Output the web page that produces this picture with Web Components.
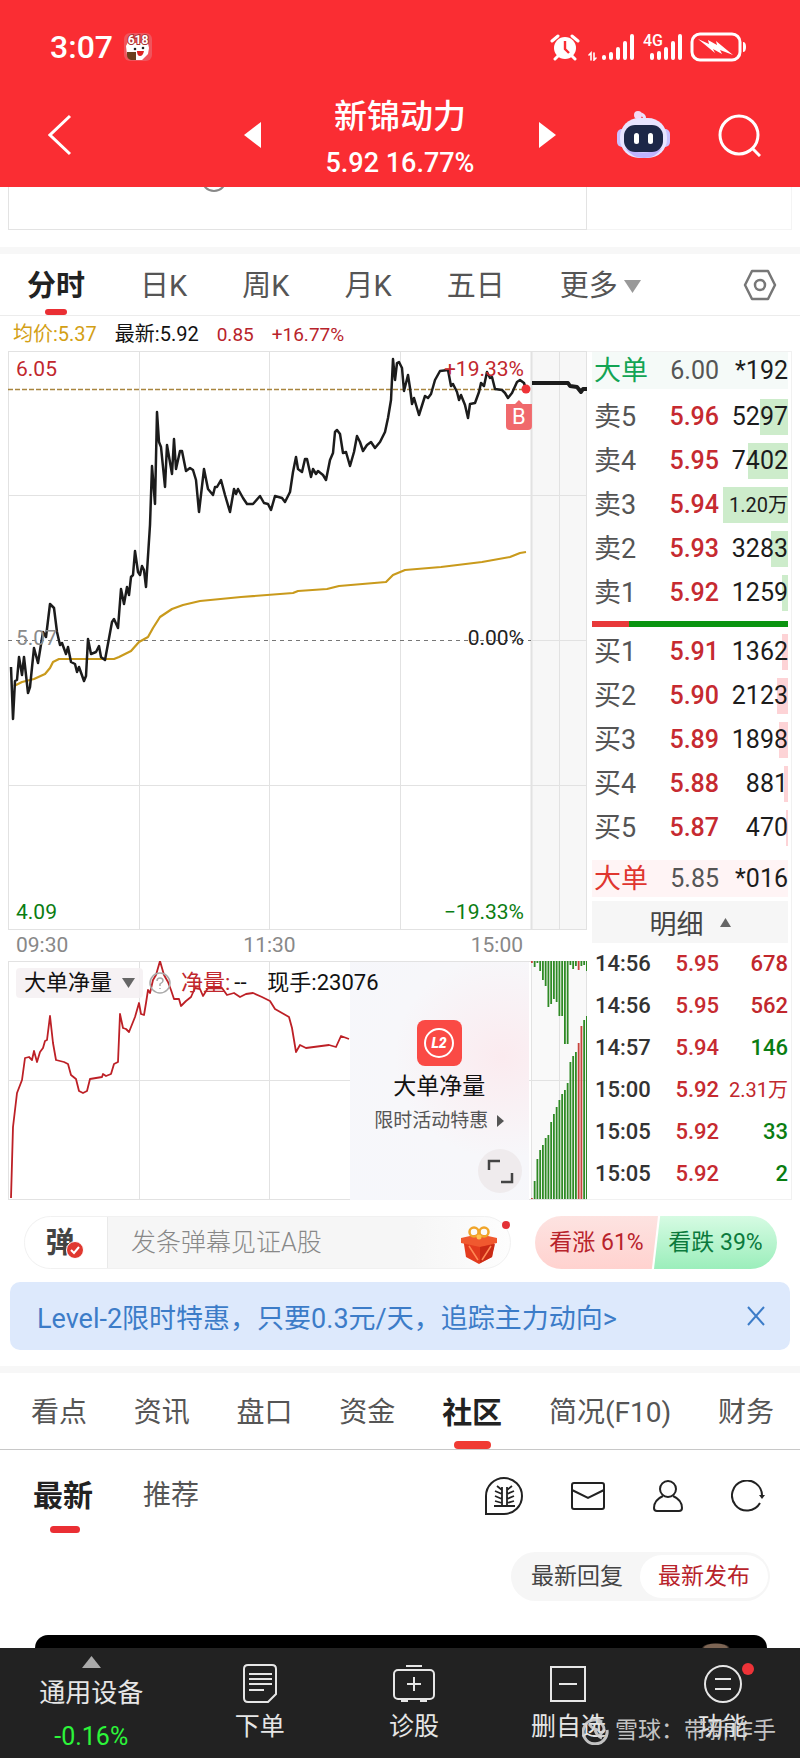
<!DOCTYPE html>
<html lang="zh-CN">
<head>
<meta charset="utf-8">
<meta name="viewport" content="width=device-width, initial-scale=1">
<title>新锦动力</title>
<style>
    body {
        margin: 0;
        min-height: 100vh;
        display: flex;
        flex-direction: column;
        background: #fff;
        color: #222;
        font-family: Roboto, "Noto Sans CJK SC", sans-serif;
    }

    .quote {
        display: flex;
        padding: 0 8px;
    }

    .charts {
        flex: 1;
        min-width: 0;
    }
</style>
</head>
<body>

<stock-header name="新锦动力" price="5.92" change="16.77%"></stock-header>
<prev-panel></prev-panel>
<period-tabs></period-tabs>
<quote-legend></quote-legend>
<div class="quote">
    <div class="charts">
        <price-chart></price-chart>
        <time-axis><span>09:30</span><span>11:30</span><span>15:00</span></time-axis>
        <flow-chart></flow-chart>
    </div>
    <order-book></order-book>
</div>
<barrage-bar></barrage-bar>
<promo-banner>Level-2限时特惠，只要0.3元/天，追踪主力动向&gt;</promo-banner>
<info-tabs></info-tabs>
<community-panel></community-panel>
<bottom-nav></bottom-nav>

<script>
//every element clones its template into an open shadow root
class BaseElement extends HTMLElement {
    constructor(){
        super();
        this.attachShadow({mode:"open"});
    }
    useTemplate(html){
        var template = document.createElement("template");
        template.innerHTML = `
        <style>
            :host, * { box-sizing: border-box; }
            button, input, select {
                font: inherit;
                color: inherit;
                background: none;
                border: 0;
                margin: 0;
                padding: 0;
            }
            a { color: inherit; text-decoration: none; }
            svg { display: block; }
        </style>` + html;
        this.shadowRoot.appendChild(template.content.cloneNode(true));
    }
}

//RED HEADER WITH STATUS BAR
class StockHeader extends BaseElement {
    connectedCallback(){
        this.useTemplate(`
<style>
    :host {
        display: block;
        background: #fa2d33;
        color: #fff;
    }
    .status {
        display: flex;
        justify-content: space-between;
        align-items: center;
        height: 66px;
        padding: 28px 53px 0 50px;
        font-size: 32px;
        line-height: 38px;
        font-weight: 500;
    }
    .left { display: flex; align-items: center; gap: 11px; }
    .right { display: flex; align-items: center; gap: 8px; }
    .bar {
        display: grid;
        grid-template-columns: 1fr auto 1fr;
        padding: 29px 39px 0;
    }
    .bar button { display: flex; align-items: center; height: 80px; }
    .bar .back { padding-left: 9px; }
    .middle { display: flex; width: 313px; justify-content: space-between; }
    .title { text-align: center; }
    h1 { margin: 0; font-size: 33px; line-height: 44px; font-weight: 500; }
    .price { font-size: 27px; line-height: 48px; font-weight: 500; }
    .tools { display: flex; justify-content: flex-end; gap: 48px; }
</style>
<div class="status">
    <div class="left">
        <span>3:07</span>
        <svg width="28" height="28" viewBox="0 0 28 28">
            <rect width="28" height="28" rx="6" fill="#f0545c"/>
            <path d="M2 13 5 7l4 3h9l5-4 2 9-1 6-6 6H8l-5-5Z" fill="#fff"/>
            <text x="14" y="11" font-size="12" font-weight="700" text-anchor="middle" fill="#fff" stroke="#a33" stroke-width="2" paint-order="stroke">618</text>
            <circle cx="11" cy="16" r="1.3" fill="#222"/><circle cx="19" cy="15" r="1.3" fill="#222"/>
            <path d="M13 18h7q-1 5-4 5t-3-5Z" fill="#d22"/>
            <path d="M3 19h9v8H7q-4-1-4-5Z" fill="#6b3f1d"/>
        </svg>
    </div>
    <div class="right">
        <svg width="30" height="28" viewBox="0 0 30 28" fill="none" stroke="#fff">
            <circle cx="15" cy="15" r="11" fill="#fff" stroke="none"/>
            <path d="M2 8 8 3M28 8 22 3M8 23l-3 3M22 23l3 3" stroke-width="3" stroke-linecap="round"/>
            <path d="M15 8v8l4 4" stroke="#fa2d33" stroke-width="2.4"/>
        </svg>
        <svg width="47" height="28" viewBox="0 0 47 28" stroke="#fff" stroke-width="4" stroke-linecap="round">
            <path d="M3 27V20l-2 2M6 20v7l2-2" stroke-width="1.6" fill="none"/>
            <path d="M16 24v1M23 21v4M30 16v9M37 10v15M44 3v22"/>
        </svg>
        <svg width="39" height="28" viewBox="0 0 39 28" stroke="#fff" stroke-width="4" stroke-linecap="round">
            <text x="0" y="13" font-size="16" font-weight="500" fill="#fff" stroke="none">4G</text>
            <path d="M9 22v3M16 20v5M23 16v9M30 10v15M37 3v22"/>
        </svg>
        <svg width="57" height="30" viewBox="0 0 57 30">
            <rect x="2" y="2" width="48" height="26" rx="8" fill="none" stroke="#fff" stroke-width="3"/>
            <path d="M53 10q3 0 3 5t-3 5Z" fill="#fff"/>
            <path d="m8 7 11 5-1-4 9 5-1-4 17 14-13-5 2 4-9-5 2 4Z" fill="#fff"/>
        </svg>
    </div>
</div>
<div class="bar">
    <button class="back" aria-label="返回">
        <svg width="24" height="42" viewBox="0 0 24 42" fill="none" stroke="#fff" stroke-width="3"><path d="M22 2 2 21l20 19"/></svg>
    </button>
    <div class="middle">
        <button aria-label="上一只"><svg width="17" height="26" viewBox="0 0 17 26"><path d="M17 0v26L0 13Z" fill="#fff"/></svg></button>
        <div class="title">
            <h1></h1>
            <div class="price"></div>
        </div>
        <button aria-label="下一只"><svg width="17" height="26" viewBox="0 0 17 26"><path d="M0 0v26l17-13Z" fill="#fff"/></svg></button>
    </div>
    <div class="tools">
        <button aria-label="助手">
            <svg width="53" height="48" viewBox="0 0 53 48">
                <path d="M27 10q2-5-3-7" fill="none" stroke="#e9e2ff" stroke-width="3"/>
                <circle cx="21" cy="4" r="4" fill="#f4d9f5"/>
                <rect x="0" y="18" width="10" height="18" rx="5" fill="#c9c0ff"/>
                <rect x="43" y="18" width="10" height="18" rx="5" fill="#c9c0ff"/>
                <rect x="3" y="7" width="47" height="40" rx="19" fill="#e8e4ff"/>
                <path d="M8 37q18 9 37 0-6 10-18 10T8 37Z" fill="#bfb4ff"/>
                <rect x="7" y="14" width="39" height="27" rx="11" fill="#1d2748"/>
                <rect x="17" y="22" width="5" height="11" rx="2.5" fill="#fff"/>
                <rect x="31" y="22" width="5" height="11" rx="2.5" fill="#fff"/>
            </svg>
        </button>
        <button aria-label="搜索">
            <svg width="43" height="43" viewBox="0 0 43 43" fill="none" stroke="#fff" stroke-width="3"><circle cx="21" cy="21" r="19"/><path d="m34 34 8 8"/></svg>
        </button>
    </div>
</div>`);
        this.shadowRoot.querySelector("h1").textContent = this.getAttribute("name");
        this.shadowRoot.querySelector(".price").textContent = this.getAttribute("price") + " " + this.getAttribute("change");
    }
}
customElements.define("stock-header", StockHeader);

//BOTTOM EDGE OF THE PANEL SCROLLED UNDER THE HEADER
class PrevPanel extends BaseElement {
    connectedCallback(){
        this.useTemplate(`
<style>
    :host { display: block; border-bottom: 7px solid #f7f7f7; padding: 0 8px 17px; }
    .row { display: flex; height: 43px; overflow: hidden; }
    .a { flex: 1; border: solid #e3e3e3; border-width: 0 1px 1px; }
    .b { width: 205px; border: solid #f4f4f4; border-width: 0 1px 1px 0; }
    svg { margin-left: 192px; }
</style>
<div class="row">
    <div class="a"><svg width="26" height="6" viewBox="0 0 26 6"><circle cx="13" cy="-8" r="12" fill="none" stroke="#888" stroke-width="2"/></svg></div>
    <div class="b"></div>
</div>`);
    }
}
customElements.define("prev-panel", PrevPanel);

//CHART PERIOD TABS
class PeriodTabs extends BaseElement {
    connectedCallback(){
        this.useTemplate(`
<style>
    :host { display: block; border-bottom: 1px solid #ececec; }
    nav {
        display: flex;
        align-items: center;
        gap: 55px;
        padding: 0 23px 0 27px;
        height: 61px;
        font-size: 29px;
        line-height: 57px;
        color: #555;
        white-space: nowrap;
    }
    button { display: flex; align-items: center; gap: 6px; position: relative; padding-top: 4px; }
    .on { font-weight: 700; color: #222; }
    .on::after {
        content: "";
        position: absolute;
        left: 50%;
        bottom: 0;
        width: 22px;
        height: 6px;
        margin-left: -11px;
        border-radius: 3px;
        background: #ea2f34;
    }
    .set { margin-left: auto; padding-top: 0; }
</style>
<nav>
    <button class="on">分时</button>
    <button>日K</button>
    <button>周K</button>
    <button>月K</button>
    <button>五日</button>
    <button>更多<svg width="17" height="13" viewBox="0 0 17 13"><path d="M0 0h17L8.5 13Z" fill="#999"/></svg></button>
    <button class="set" aria-label="设置">
        <svg width="34" height="34" viewBox="0 0 34 34" fill="none" stroke="#777" stroke-width="2.5" stroke-linejoin="round"><path d="M9 3h16l7 14-7 14H9L2 17Z"/><circle cx="17" cy="17" r="5"/></svg>
    </button>
</nav>`);
    }
}
customElements.define("period-tabs", PeriodTabs);

class QuoteLegend extends BaseElement {
    connectedCallback(){
        this.useTemplate(`
<style>
    :host {
        display: flex;
        gap: 18px;
        padding: 2px 13px 0;
        font-size: 20px;
        line-height: 33px;
    }
    .avg { color: #d3a015; }
    .last { color: #111; }
    .up { color: #b8232b; font-size: 19px; }
</style>
<span class="avg">均价:5.37</span>
<span class="last">最新:5.92</span>
<span class="up">0.85</span>
<span class="up">+16.77%</span>`);
    }
}
customElements.define("quote-legend", QuoteLegend);

//INTRADAY PRICE LINE
class PriceChart extends BaseElement {
    connectedCallback(){
        this.useTemplate(`
<style>
    :host { display: grid; position: relative; height: 579px; }
    svg, .labels { grid-area: 1 / 1; }
    .plot { width: 100%; height: 100%; }
    .plot * { vector-effect: non-scaling-stroke; }
    .labels {
        display: flex;
        flex-direction: column;
        justify-content: space-between;
        padding: 0 63px 0 8px;
        font-size: 21px;
        line-height: 36px;
        z-index: 1;
    }
    .labels div { display: flex; justify-content: space-between; }
    .up { color: #c1272d; }
    .down { color: #0a7d12; }
    .zero { padding-bottom: 6px; }
    .zero span:first-child { color: #8b8b8b; }
    .buy {
        position: absolute;
        left: 86%;
        top: 49px;
        width: 26px;
        height: 30px;
        padding-top: 3px;
        background: #f0696c;
        clip-path: polygon(0 4px, 35% 4px, 50% 0, 65% 4px, 100% 4px, 100% 100%, 0 100%);
        border-radius: 4px;
        color: #fff;
        font-size: 22px;
        line-height: 27px;
        text-align: center;
    }
</style>
<svg class="plot" viewBox="8 351 579 579" preserveAspectRatio="none" fill="none">
    <rect x="531" y="351" width="56" height="579" fill="#f7f7f7"/>
    <path d="M8.5 351V930M139.5 351V930M269.5 351V930M400.5 351V930M559.5 351V930M586.5 351V930M8 351.5H587M8 495.5H587M531 640.5H587M8 785.5H587M8 929.5H587" stroke="#e2e2e2"/>
    <path d="M531.5 351V930" stroke="#e2e2e2" stroke-width="2"/>
    <path d="M8 640.5H531" stroke="#777" stroke-dasharray="4 4"/>
    <path d="M8 389.5H526" stroke="#a8853f" stroke-width="1.5" stroke-dasharray="5 2"/>
    <polyline stroke="#c99a1c" stroke-width="2.2" stroke-linejoin="round" points="14,686 22,682 34,679 45,674 50,668 53,662 59,659 114,659 119,657 131,651 139,642 148,637 153,628 160,617 172,609 183,605 200,601 241,597 293,593 298,591 327,589 339,586 386,582 393,575 405,570 441,567 482,562 510,557 520,553 526,552"/>
    <polyline stroke="#1c1c1c" stroke-width="2.5" stroke-linejoin="round" points="11,667 13,719 15,681 17,680 19,657 22,675 24,657 28,693 30,687 34,648 38,663 43,632 46,637 50,604 54,608 57,632 60,645 62,643 66,654 68,647 71,662 75,664 77,672 79,667 84,681 86,676 88,639 91,654 96,652 99,646 101,657 105,660 112,622 114,619 118,628 121,589 124,604 127,587 129,595 131,577 133,575 135,551 138,572 140,575 142,566 144,570 146,587 150,525 152,466 155,504 157,412 159,442 161,447 165,487 167,445 172,474 174,439 176,469 180,451 182,451 186,471 190,468 193,470 196,480 199,512 204,469 208,489 213,495 215,487 217,487 221,480 225,495 230,512 234,489 236,494 238,489 243,498 247,504 253,504 260,496 264,503 268,504 271,510 275,496 282,498 285,502 290,492 293,472 296,457 298,469 302,472 305,459 307,459 311,477 313,469 316,474 318,471 323,475 326,480 330,460 333,453 335,432 337,430 340,434 343,453 346,452 350,466 354,452 357,436 360,442 363,451 367,445 371,442 375,448 380,442 385,432 388,418 391,400 393,359 395,380 397,363 399,362 402,368 404,391 408,375 410,388 412,404 414,398 419,415 425,396 428,398 431,394 435,380 440,371 448,370 451,386 453,384 457,392 459,400 461,395 465,405 468,418 470,404 475,403 479,392 481,383 484,386 487,372 490,378 492,377 495,389 502,390 505,393 508,398 512,393 517,382 520,380 524,383 526,389"/>
    <polyline stroke="#1c1c1c" stroke-width="4" stroke-linejoin="round" points="532,383 568,383 570,386 577,387 581,392 583,389 587,389"/>
    <circle cx="526" cy="389" r="4.5" fill="#ee3338"/>
</svg>
<div class="labels">
    <div class="up"><span>6.05</span><span>+19.33%</span></div>
    <div class="zero"><span>5.07</span><span>0.00%</span></div>
    <div class="down"><span>4.09</span><span>−19.33%</span></div>
</div>
<div class="buy">B</div>`);
    }
}
customElements.define("price-chart", PriceChart);

class TimeAxis extends BaseElement {
    connectedCallback(){
        this.useTemplate(`
<style>
    :host {
        display: flex;
        justify-content: space-between;
        padding: 0 64px 0 8px;
        font-size: 21px;
        line-height: 31px;
        color: #888;
    }
</style>
<slot></slot>`);
    }
}
customElements.define("time-axis", TimeAxis);

//BIG ORDER FLOW, WITH THE CALL AUCTION BARS ON THE RIGHT
//"r" after a number makes a red bar
const AUCTION_TOP = "2r 6 2 10 19 25 46 43 38 41 55 55 83 83 4 8 5 9r 5 4 10".split(" ");
const AUCTION_BOTTOM = "1r 18 40 49 54 61 64 77 85 92 99 105 109 116 137 143 147 156r 173r 179 183".split(" ");

class FlowChart extends BaseElement {
    connectedCallback(){
        this.useTemplate(`
<style>
    :host { display: grid; position: relative; height: 239px; }
    .plot { grid-area: 1 / 1; width: 100%; height: 100%; }
    .plot * { vector-effect: non-scaling-stroke; }
    .head {
        grid-area: 1 / 1;
        align-self: start;
        display: flex;
        align-items: center;
        margin: 7px 0 0 8px;
        font-size: 22px;
        line-height: 30px;
        color: #111;
        z-index: 2;
        white-space: nowrap;
    }
    label { display: flex; align-items: center; width: 127px; padding-left: 8px; background: rgba(244,240,242,.85); border-radius: 4px; }
    select { appearance: none; width: 98px; height: 30px; line-height: 30px; color: #111; }
    .help { margin: 0 10px 0 6px; }
    .up { color: #c1272d; }
    .net { width: 37px; padding-left: 4px; }
    .promo {
        position: absolute;
        left: 59%;
        top: 1px;
        bottom: 0;
        width: 31%;
        display: flex;
        flex-direction: column;
        align-items: center;
        padding-top: 58px;
        background: radial-gradient(ellipse at 85% 40%, #fbebef 0, #f7f7fa 50%, #f6f7fb 100%);
        font-size: 19px;
        line-height: 26px;
        color: #555;
    }
    .promo strong { font-size: 23px; line-height: 42px; font-weight: 400; color: #111; }
    .promo span { display: flex; align-items: center; gap: 9px; white-space: nowrap; }
    .full { position: absolute; left: 81%; bottom: 7px; margin-left: 1px; }
</style>
<svg class="plot" viewBox="8 961 579 239" preserveAspectRatio="none" fill="none">
    <rect x="531" y="961" width="56" height="239" fill="#f9f9f9"/>
    <path d="M8.5 961V1200M139.5 961V1200M269.5 961V1200M531.5 961V1200M559.5 961V1200M586.5 961V1200M8 961.5H587M8 1080.5H587M8 1199.5H587" stroke="#e2e2e2"/>
    <polyline stroke="#bd2026" stroke-width="1.8" stroke-linejoin="round" points="11,1198 13,1127 17,1093 22,1080 25,1058 29,1057 32,1060 34,1051 37,1062 40,1052 43,1048 45,1041 47,1040 50,1016 53,1043 56,1060 64,1062 68,1064 71,1075 76,1079 79,1091 83,1093 87,1091 90,1079 102,1077 103,1074 106,1076 111,1074 114,1064 118,1062 120,1014 123,1028 126,1029 129,1032 133,1022 135,1017 139,1003 141,1014 144,1015 146,1003 148,990 150,993 153,980 156,975 160,961 164,975 168,982 171,990 174,999 179,999 181,1006 186,1001 191,997 195,988 200,989 203,996 208,988 222,988 227,995 234,993 240,997 246,994 253,993 262,997 270,1001 275,1009 282,1013 289,1017 292,1028 296,1052 300,1045 306,1048 329,1045 336,1047 341,1036 349,1039"/>
    <g class="bars"></g>
</svg>
<a class="promo" href="#">
    <svg width="45" height="46" viewBox="0 0 45 46">
        <rect width="45" height="46" rx="8" fill="#fa4a45"/>
        <circle cx="22" cy="23" r="14" fill="none" stroke="#fff" stroke-width="2"/>
        <text x="22" y="28" font-size="14" font-weight="900" font-style="italic" text-anchor="middle" fill="#fff">L2</text>
    </svg>
    <strong>大单净量</strong>
    <span>限时活动特惠<svg width="7" height="12" viewBox="0 0 7 12"><path d="M0 0 7 6 0 12Z" fill="#555"/></svg></span>
</a>
<div class="head">
    <label>
        <select aria-label="指标"><option>大单净量</option></select>
        <svg width="13" height="10" viewBox="0 0 13 10"><path d="M0 0h13L6.5 10Z" fill="#666"/></svg>
    </label>
    <svg class="help" width="22" height="22" viewBox="0 0 22 22" fill="none" stroke="#aaa" stroke-width="1.5"><circle cx="11" cy="11" r="10"/><path d="M8 9q0-3 3-3t3 3q0 1-3 3v2M11 16v1"/></svg>
    <span class="up">净量:</span>
    <span class="net">--</span>
    <span>现手:23076</span>
</div>
<button class="full" aria-label="全屏">
    <svg width="44" height="44" viewBox="0 0 44 44" fill="none" stroke="#444" stroke-width="2.5"><circle cx="22" cy="22" r="22" fill="#efebed" stroke="none"/><path d="M11 21V12h11M34 24v9H23"/></svg>
</button>`);
        this.drawBars();
    }

    drawBars(){
        var step = 55 / 20;
        var out = "";
        AUCTION_TOP.forEach((v, i) => {
            out += this.bar(532 + i * step - 1, 961, v);
        });
        AUCTION_BOTTOM.forEach((v, i) => {
            out += this.bar(532 + i * step - 1, 1199 - parseInt(v), v);
        });
        this.shadowRoot.querySelector(".bars").innerHTML = out;
    }

    bar(x, y, v){
        var color = v.endsWith("r") ? "#c8443c" : "#2f8a25";
        return `<rect x="${x}" y="${y}" width="1.8" height="${parseInt(v)}" fill="${color}"/>`;
    }
}
customElements.define("flow-chart", FlowChart);

//FIVE LEVEL QUOTES AND THE LAST TRADES
//label, price, amount, width of the depth bar
const SELLS = [["卖5","5.96","5297",28],["卖4","5.95","7402",40],["卖3","5.94","1.20万",65],["卖2","5.93","3283",17],["卖1","5.92","1259",6]];
const BUYS = [["买1","5.91","1362",6],["买2","5.90","2123",11],["买3","5.89","1898",9],["买4","5.88","881",4],["买5","5.87","470",2]];
const TRADES = [["14:56","5.95","678","up"],["14:56","5.95","562","up"],["14:57","5.94","146","down"],["15:00","5.92","2.31万","up"],["15:05","5.92","33","down"],["15:05","5.92","2","down"]];

class OrderBook extends BaseElement {
    connectedCallback(){
        this.useTemplate(`
<style>
    :host {
        display: block;
        width: 205px;
        border: solid #f1f1f1;
        border-width: 1px 1px 1px 0;
        padding: 0 3px 0 5px;
        color: #1c1c1c;
    }
    table { width: 100%; border-collapse: collapse; table-layout: fixed; font-size: 25px; }
    td, th { padding: 0; height: 44px; line-height: 36px; text-align: right; white-space: nowrap; font-weight: 400; }
    th { text-align: left; padding-left: 2px; font-size: 27px; color: #555; }
    .c1 { width: 60px; }
    .c2 { width: 67px; }
    td.price { color: #c62a30; font-weight: 500; }
    td span {
        display: block;
        height: 36px;
        background: linear-gradient(var(--tint), var(--tint)) right / var(--w) 100% no-repeat;
    }
    .sell { --tint: #cdeccb; }
    .buy { --tint: #fdd3d6; }
    td .small { font-size: 20px; }
    .big td, .big th { height: 37px; font-weight: 400; }
    .big td.price { color: #555; font-weight: 400; }
    .big.s { background: #f5faf8; margin-bottom: 6px; }
    .big.s th { color: #12a454; }
    .big.b { background: #fff4f5; margin-top: 10px; }
    .big.b th { color: #e0352f; }
    .ratio { display: flex; height: 6px; margin: 6px 0 3px; background: #0a9410; }
    .ratio i { width: 19%; background: #e8393a; }
    .detail {
        display: flex;
        align-items: center;
        justify-content: center;
        gap: 16px;
        width: 100%;
        height: 42px;
        margin-top: 4px;
        background: #f6f6f6;
        font-size: 27px;
        color: #444;
    }
    .trades { font-size: 22px; }
    .trades td { height: 42px; font-weight: 500; }
    .trades td.small { font-size: 20px; font-weight: 400; }
    .trades td:first-child { text-align: left; padding-left: 3px; color: #333; }
    .up { color: #c1272d; }
    .down { color: #0a7d12; }
</style>
<table class="big s"><tr><th class="c1">大单</th><td class="c2 price">6.00</td><td>*192</td></tr></table>
<table class="sell"></table>
<div class="ratio"><i></i></div>
<table class="buy"></table>
<table class="big b"><tr><th class="c1">大单</th><td class="c2 price">5.85</td><td>*016</td></tr></table>
<button class="detail">明细<svg width="11" height="9" viewBox="0 0 11 9"><path d="M0 9h11L5.5 0Z" fill="#666"/></svg></button>
<table class="trades"></table>`);
        this.shadowRoot.querySelector(".sell").innerHTML = this.levels(SELLS);
        this.shadowRoot.querySelector(".buy").innerHTML = this.levels(BUYS);
        this.shadowRoot.querySelector(".trades").innerHTML = TRADES.map(([time, price, amount, dir]) => `
            <tr><td class="c1">${time}</td><td class="c2 price">${price}</td><td class="${dir} ${this.size(amount)}">${amount}</td></tr>`).join("");
    }

    size(amount){
        return amount.endsWith("万") ? "small" : "";
    }

    levels(rows){
        return rows.map(([label, price, amount, w]) => `
            <tr><th class="c1">${label}</th><td class="c2 price">${price}</td><td><span class="${this.size(amount)}" style="--w:${w}px">${amount}</span></td></tr>`).join("");
    }
}
customElements.define("order-book", OrderBook);

//COMMENT BOX AND BULL / BEAR VOTE
class BarrageBar extends BaseElement {
    connectedCallback(){
        this.useTemplate(`
<style>
    :host { display: flex; gap: 24px; padding: 16px 23px 13px 24px; }
    .box {
        position: relative;
        flex: 1;
        display: flex;
        align-items: center;
        height: 53px;
        border: 1px solid #f1f1f1;
        border-radius: 27px;
        background: linear-gradient(90deg, #f6f6f6 80%, #fdfdfd);
    }
    .mode {
        position: relative;
        width: 83px;
        height: 51px;
        padding-right: 12px;
        border-right: 1px solid #e9e9e9;
        border-radius: 26px 0 0 26px;
        background: #fff;
        font-size: 29px;
        line-height: 44px;
        font-weight: 700;
        color: #444;
    }
    .mode svg { position: absolute; left: 41px; top: 24px; }
    input { flex: 1; min-width: 0; height: 51px; padding-left: 23px; font-size: 25px; outline: none; }
    input::placeholder { color: #888; opacity: 1; font-weight: 300; }
    .gift { margin-right: 13px; padding-top: 4px; }
    .dot { position: absolute; right: 0; top: 4px; width: 8px; height: 8px; border-radius: 4px; background: #e33136; }
    .vote { display: flex; font-size: 23px; line-height: 53px; }
    .vote button { width: 123px; height: 53px; white-space: nowrap; }
    .rise {
        background: linear-gradient(#fde3e1, #ffd2cf);
        color: #b8232b;
        border-radius: 27px 0 0 27px;
        clip-path: polygon(0 0, 100% 0, 95% 100%, 0 100%);
    }
    .fall {
        background: linear-gradient(#d6fbe3, #9beebb);
        color: #0b7a3d;
        border-radius: 0 27px 27px 0;
        clip-path: polygon(5% 0, 100% 0, 100% 100%, 0 100%);
        margin-left: -4px;
    }
</style>
<div class="box">
    <button class="mode">弹<svg width="18" height="18" viewBox="0 0 18 18"><circle cx="9" cy="9" r="8.5" fill="#e0382f" stroke="#fff"/><path d="m5 9 3 3 5-6" fill="none" stroke="#fff" stroke-width="2"/></svg></button>
    <input type="text" aria-label="弹幕" placeholder="发条弹幕见证A股">
    <button class="gift" aria-label="礼物">
        <svg width="36" height="38" viewBox="0 0 36 38">
            <path d="M2 12h32l-3 19-13 7-13-7Z" fill="#e33b1e"/>
            <path d="M0 12 18 8l18 4v5l-17 4L0 17Z" fill="#f0592f"/>
            <path d="M19 21v16l12-6 3-13Z" fill="#c92a15"/>
            <path d="m8 20 9 14M30 20 21 34" stroke="#ff8a55" stroke-width="1.5"/>
            <circle cx="13" cy="6" r="4.500" fill="none" stroke="#f0a52a" stroke-width="2.500"/>
            <circle cx="23" cy="6" r="4.500" fill="none" stroke="#f0a52a" stroke-width="2.500"/>
            <circle cx="18" cy="11" r="2.500" fill="#ffc14d"/>
        </svg>
    </button>
    <i class="dot"></i>
</div>
<div class="vote">
    <button class="rise">看涨 61%</button>
    <button class="fall">看跌 39%</button>
</div>`);
    }
}
customElements.define("barrage-bar", BarrageBar);

class PromoBanner extends BaseElement {
    connectedCallback(){
        this.useTemplate(`
<style>
    :host {
        display: flex;
        align-items: center;
        justify-content: space-between;
        height: 68px;
        margin: 0 10px;
        padding: 0 25px 0 27px;
        border-radius: 10px;
        background: #dde9fc;
        color: #3c7cc8;
        font-size: 27px;
        white-space: nowrap;
    }
</style>
<a href="#"><slot></slot></a>
<button aria-label="关闭"><svg width="18" height="20" viewBox="0 0 18 20" stroke="#3c7cc8" stroke-width="2"><path d="m1 1 16 18M17 1 1 19"/></svg></button>`);
    }
}
customElements.define("promo-banner", PromoBanner);

class InfoTabs extends BaseElement {
    connectedCallback(){
        this.useTemplate(`
<style>
    :host { display: block; margin-top: 16px; border-top: 7px solid #f7f7f7; border-bottom: 1px solid #c8c8c8; }
    nav {
        display: flex;
        justify-content: space-between;
        padding: 0 26px 0 31px;
        height: 76px;
        font-size: 28px;
        line-height: 72px;
        color: #555;
        white-space: nowrap;
    }
    a { position: relative; padding-top: 4px; }
    .on { font-size: 30px; font-weight: 700; color: #222; }
    .on::after {
        content: "";
        position: absolute;
        left: 50%;
        bottom: 0;
        width: 37px;
        height: 8px;
        margin-left: -18px;
        border-radius: 4px;
        background: #f03b34;
    }
</style>
<nav>
    <a href="#">看点</a>
    <a href="#">资讯</a>
    <a href="#">盘口</a>
    <a href="#">资金</a>
    <a href="#" class="on">社区</a>
    <a href="#">简况(F10)</a>
    <a href="#">财务</a>
</nav>`);
    }
}
customElements.define("info-tabs", InfoTabs);

//COMMUNITY FEED HEAD AND THE FIRST CARD
class CommunityPanel extends BaseElement {
    connectedCallback(){
        this.useTemplate(`
<style>
    :host { display: flex; flex-direction: column; flex: 1; }
    .top { display: flex; justify-content: space-between; padding: 0 35px 0 33px; height: 90px; }
    .tabs { display: flex; gap: 50px; font-size: 28px; line-height: 88px; color: #555; }
    .tabs button { position: relative; height: 90px; padding-top: 2px; }
    .tabs .on { font-size: 30px; font-weight: 700; color: #222; }
    .on::after {
        content: "";
        position: absolute;
        left: 50%;
        bottom: 7px;
        width: 30px;
        height: 7px;
        margin-left: -13px;
        border-radius: 4px;
        background: #ea2f34;
    }
    .tools { display: flex; align-items: center; gap: 48px; padding-top: 2px; }
    .seg {
        align-self: flex-end;
        display: flex;
        margin: 12px 30px 0 0;
        padding: 3px 2px 3px 20px;
        border-radius: 25px;
        background: #f6f6f6;
        font-size: 23px;
        line-height: 43px;
        color: #444;
    }
    .seg button { height: 43px; }
    .seg .now { margin-left: 17px; padding: 0 18px; border-radius: 22px; background: #fff; color: #b8232b; }
    .card {
        flex: 1;
        min-height: 13px;
        margin: 34px 33px 0 35px;
        border-radius: 16px 16px 0 0;
        background: radial-gradient(ellipse 14px 5px at 93% 100%, #7d6554 80%, transparent), #000;
    }
</style>
<div class="top">
    <div class="tabs">
        <button class="on">最新</button>
        <button>推荐</button>
    </div>
    <div class="tools">
        <button aria-label="股吧">
            <svg width="38" height="38" viewBox="0 0 38 38" fill="none" stroke="#222" stroke-width="2"><path d="M1 37V19a18 18 0 1 1 18 18Z"/><path d="M17 10v18M22 10v18M9 29h21M17 17l-7-3M17 22l-7-3M17 26l-7-2M22 17l7-3M22 22l7-3M22 26l7-2M12 9l5 4M27 9l-5 4" stroke-width="1.800"/></svg>
        </button>
        <button aria-label="消息">
            <svg width="34" height="28" viewBox="0 0 34 28" fill="none" stroke="#222" stroke-width="2"><rect x="1" y="1" width="32" height="26" rx="2"/><path d="m1 8 16 8 16-8"/></svg>
        </button>
        <button aria-label="我的">
            <svg width="30" height="32" viewBox="0 0 30 32" fill="none" stroke="#222" stroke-width="2"><circle cx="15" cy="9" r="8"/><path d="M10 16Q1 20 1 28q0 3 3 3h22q3 0 3-3 0-8-9-12"/></svg>
        </button>
        <button aria-label="刷新">
            <svg width="34" height="32" viewBox="0 0 34 32" fill="none" stroke="#222" stroke-width="2"><path d="M29 23A15 15 0 1 1 31 16"/><path d="M28 15h6l-3 4Z" fill="#222" stroke="none"/></svg>
        </button>
    </div>
</div>
<div class="seg">
    <button>最新回复</button>
    <button class="now">最新发布</button>
</div>
<div class="card"></div>`);
    }
}
customElements.define("community-panel", CommunityPanel);

class BottomNav extends BaseElement {
    connectedCallback(){
        this.useTemplate(`
<style>
    :host { display: block; position: relative; background: #222; color: #e6e6e6; }
    nav {
        display: grid;
        grid-template-columns: 13fr repeat(4, 11fr);
        justify-items: center;
        height: 110px;
        font-size: 25px;
        line-height: 32px;
        white-space: nowrap;
    }
    button {
        position: relative;
        display: flex;
        flex-direction: column;
        align-items: center;
        padding-top: 16px;
    }
    button svg { margin-bottom: 8px; }
    .index { padding-top: 8px; font-size: 26px; }
    .index svg { margin-bottom: 9px; }
    .index span { margin-top: 12px; font-size: 25px; color: #2cf53a; }
    .dot { position: absolute; right: -6px; top: 15px; width: 12px; height: 12px; border-radius: 6px; background: #ee3338; }
    .mark {
        position: absolute;
        right: 24px;
        bottom: 10px;
        display: flex;
        align-items: center;
        gap: 6px;
        font-size: 23px;
        line-height: 34px;
        color: #d4d4d4;
        opacity: .9;
    }
</style>
<nav>
    <button class="index">
        <svg width="19" height="12" viewBox="0 0 19 12"><path d="M0 12h19L9.5 0Z" fill="#aaa"/></svg>
        通用设备
        <span>-0.16%</span>
    </button>
    <button>
        <svg width="34" height="39" viewBox="0 0 34 39" fill="none" stroke="#e6e6e6" stroke-width="2"><path d="M5 1h24q4 0 4 4v25l-8 8H5q-4 0-4-4V5q0-4 4-4Z"/><path d="M6 10h23M6 15h23M6 20h23M6 26h15"/></svg>
        下单
    </button>
    <button>
        <svg width="42" height="39" viewBox="0 0 42 39" fill="none" stroke="#e6e6e6" stroke-width="2"><rect x="1" y="6" width="40" height="29" rx="4"/><path d="M13 2h16M21 13v14M14 20h14M8 37h7M27 37h7"/></svg>
        诊股
    </button>
    <button>
        <svg width="36" height="39" viewBox="0 0 36 39" fill="none" stroke="#e6e6e6" stroke-width="2"><path d="M1 3h34v34H1ZM9 20h18"/></svg>
        删自选
    </button>
    <button>
        <svg width="38" height="39" viewBox="0 0 38 39" fill="none" stroke="#e6e6e6" stroke-width="2"><circle cx="19" cy="20" r="18"/><path d="M11 15h16M11 25h16"/></svg>
        功能
        <i class="dot"></i>
    </button>
</nav>
<div class="mark">
    <svg width="27" height="27" viewBox="0 0 27 27" fill="none" stroke="#d4d4d4" stroke-width="3"><path d="M20 4A12 12 0 1 0 25 12"/><path d="M7 6q4 6 11 6M20 20q-5-2-7-8M16 3q6 3 6 9l-4 5"/></svg>
    <span>雪球：带新作手</span>
</div>`);
    }
}
customElements.define("bottom-nav", BottomNav);
</script>
</body>
</html>
